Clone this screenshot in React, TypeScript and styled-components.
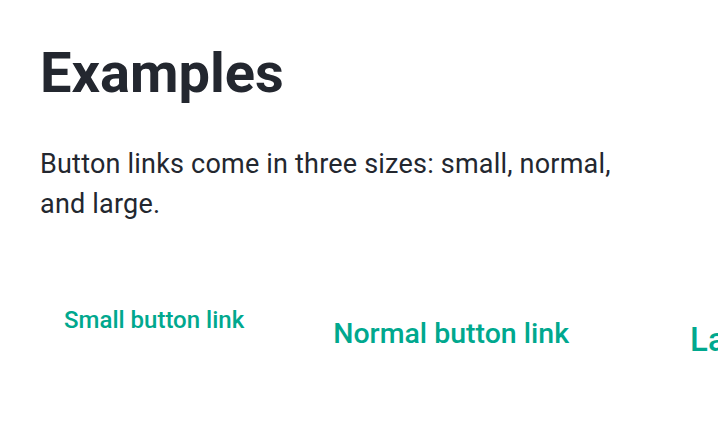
import React from "react";
import styled, { createGlobalStyle } from "styled-components";

const Global = createGlobalStyle`
  html, body { margin: 0; padding: 0; background: #ffffff; }
  body { font-family: Roboto, "Noto Sans", sans-serif; color: #23272f; overflow: hidden; }
`;

const Page = styled.main`
  padding: 40px 40px 0 40px;
  width: 718px;
  box-sizing: border-box;
`;

const Title = styled.h1`
  margin: 0;
  font-size: 56px;
  font-weight: 700;
  line-height: 1.2;
  color: #23272f;
`;

const Lead = styled.p`
  margin: 37px 0 0 0;
  max-width: 600px;
  font-size: 27px;
  letter-spacing: 0.2px;
  line-height: 40px;
  font-weight: 400;
  color: #23272f;
`;

const Row = styled.div`
  display: flex;
  align-items: flex-start;
  margin-top: 66px;
  white-space: nowrap;
`;

type Size = "small" | "normal" | "large";

const sizes: Record<Size, { font: number; pt: number; px: number; ml: number }> = {
  small: { font: 24, pt: 12, px: 24, ml: 0 },
  normal: { font: 28.5, pt: 23, px: 32, ml: 33 },
  large: { font: 33, pt: 25, px: 40, ml: 49 },
};

const ButtonLink = styled.a<{ $size: Size }>`
  display: inline-block;
  flex: none;
  font-weight: 500;
  line-height: 1.5;
  color: #00a88e;
  text-decoration: none;
  font-size: ${(p) => sizes[p.$size].font}px;
  padding: ${(p) => sizes[p.$size].pt}px ${(p) => sizes[p.$size].px}px 12px;
  margin-left: ${(p) => sizes[p.$size].ml}px;
`;

export default function App() {
  return (
    <>
      <Global />
      <Page>
        <Title>Examples</Title>
        <Lead>Button links come in three sizes: small, normal, and large.</Lead>
        <Row>
          <ButtonLink $size="small" href="#">Small button link</ButtonLink>
          <ButtonLink $size="normal" href="#">Normal button link</ButtonLink>
          <ButtonLink $size="large" href="#">Large button link</ButtonLink>
        </Row>
      </Page>
    </>
  );
}
